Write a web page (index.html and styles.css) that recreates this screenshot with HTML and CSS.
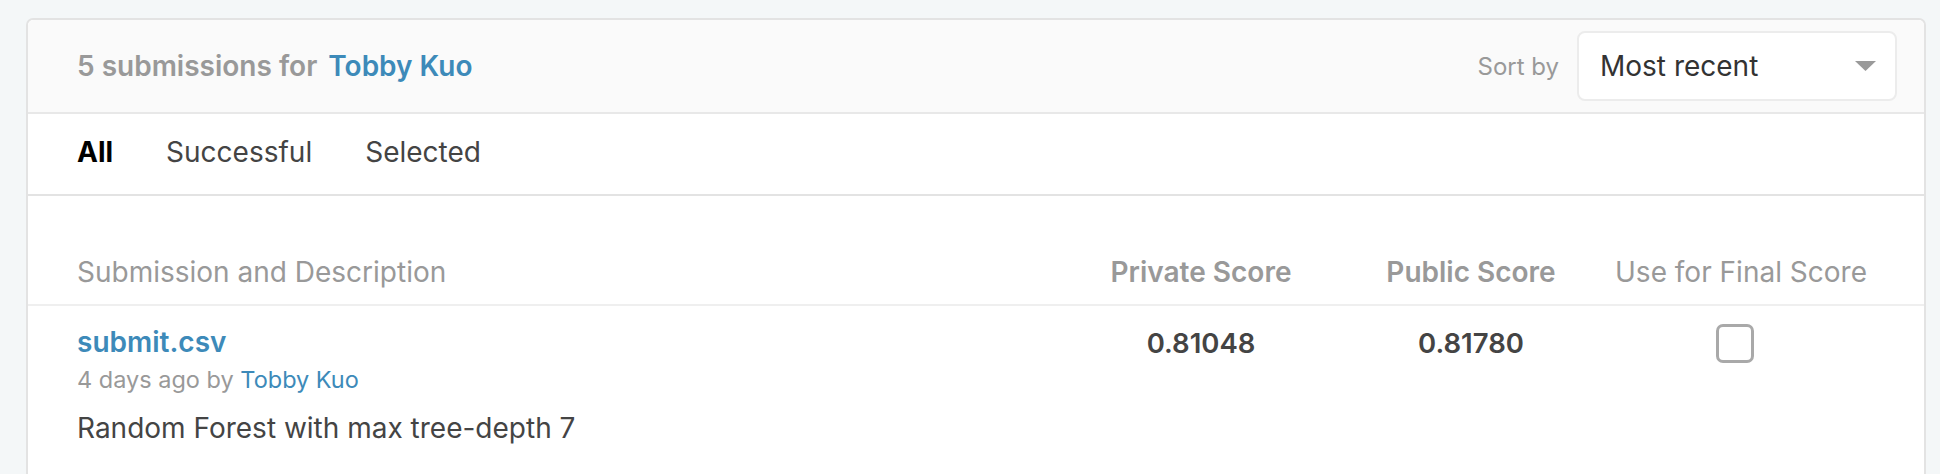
FILE: index.html
```html
<!DOCTYPE html>
<html lang="en">
<head>
<meta charset="utf-8">
<title>Submissions</title>
<link rel="stylesheet" href="styles.css">
</head>
<body>
<div class="page">
  <section class="card">
    <header class="card-header">
      <h2 class="title"><span class="count">5 submissions for</span><a class="user" href="#">Tobby Kuo</a></h2>
      <div class="sort">
        <span class="sort-label">Sort by</span>
        <div class="select">
          <span class="select-value">Most recent</span>
          <svg class="caret" width="21" height="10" viewBox="0 0 21 10"><polygon points="0,0 21,0 10.5,10" fill="#9a9a9a"/></svg>
        </div>
      </div>
    </header>
    <nav class="tabs">
      <a class="tab active" href="#">All</a>
      <a class="tab" href="#">Successful</a>
      <a class="tab" href="#">Selected</a>
    </nav>
    <div class="table">
      <div class="grid thead">
        <div class="th">Submission and Description</div>
        <div class="th center bold">Private Score</div>
        <div class="th center bold">Public Score</div>
        <div class="th center">Use for Final Score</div>
      </div>
      <div class="grid trow">
        <div class="cell-main">
          <a class="file" href="#">submit.csv</a>
          <div class="meta">4 days ago by <a class="meta-user" href="#">Tobby Kuo</a></div>
          <div class="desc">Random Forest with max tree-depth 7</div>
        </div>
        <div class="score">0.81048</div>
        <div class="score">0.81780</div>
        <div class="check-cell"><span class="checkbox"></span></div>
      </div>
    </div>
  </section>
</div>
</body>
</html>
```
FILE: styles.css
```css
* { box-sizing: border-box; }
html, body { margin: 0; padding: 0; }
body {
  background: #f4f7f8;
  font-family: "Inter", "Roboto", "Liberation Sans", sans-serif;
  color: #444;
}
a { text-decoration: none; }
.page {
  padding: 18px 14px 0 26px;
  height: 474px;
  overflow: hidden;
}
.card {
  background: #fff;
  border: 2px solid #e3e3e3;
  border-radius: 7px;
  min-height: 520px;
}
.card-header {
  height: 94px;
  background: #fafafa;
  border-bottom: 2px solid #e8e8e8;
  border-radius: 6px 6px 0 0;
  display: flex;
  align-items: center;
  justify-content: space-between;
  padding: 0 27px 0 49px;
}
.title {
  margin: 0;
  font-size: 28px;
  font-weight: 600;
  line-height: 36px;
}
.count { color: #999; }
.user { color: #3d8ab9; margin-left: 11px; }
.sort { display: flex; align-items: center; gap: 18px; }
.sort-label { font-size: 24px; color: #999; }
.select {
  width: 320px;
  height: 70px;
  background: #fff;
  border: 2px solid #ececec;
  border-radius: 8px;
  display: flex;
  align-items: center;
  justify-content: space-between;
  padding: 0 19px 0 21px;
}
.select-value { font-size: 28px; color: #333; }
.caret { display: block; }
.tabs {
  height: 82px;
  border-bottom: 2px solid #e3e3e3;
  display: flex;
  align-items: center;
  gap: 53px;
  padding: 0 49px 5px;
}
.tab { font-size: 28px; color: #444; }
.tab.active { color: #000; font-weight: 700; }
.grid {
  display: grid;
  grid-template-columns: 1fr 270px 270px 270px;
  padding: 0 48px 0 49px;
}
.thead {
  padding-top: 56px;
  padding-bottom: 12px;
  border-bottom: 2px solid #efefef;
}
.th { font-size: 28px; line-height: 40px; color: #999; }
.center { text-align: center; }
.bold { font-weight: 600; }
.trow { padding-top: 18px; }
.cell-main { display: flex; flex-direction: column; }
.file { font-size: 28px; font-weight: 600; color: #3d8ab9; line-height: 36px; }
.meta { font-size: 23.5px; color: #999; line-height: 36px; margin-top: 2px; }
.meta-user { color: #3d8ab9; }
.desc { font-size: 28px; color: #444; line-height: 36px; margin-top: 12px; }
.score {
  text-align: center;
  font-size: 27.5px;
  font-weight: 600;
  color: #444;
  line-height: 36px;
  padding-top: 1px;
}
.check-cell { display: flex; justify-content: center; padding-right: 12px; }
.checkbox {
  width: 38px;
  height: 39px;
  border: 3px solid #a9a9a9;
  border-radius: 7px;
  display: block;
}
```
